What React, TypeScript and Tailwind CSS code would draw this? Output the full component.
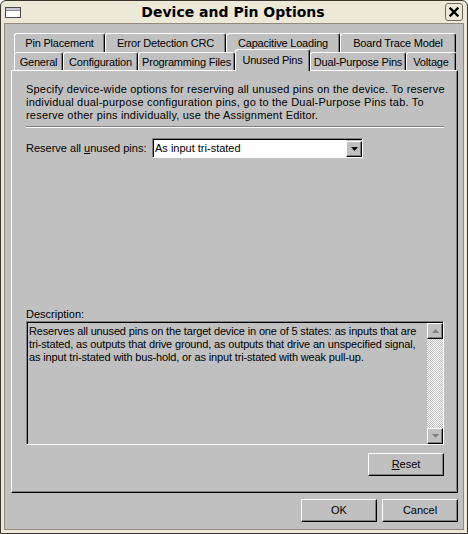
import React from "react";

const F = { fontFamily: '"Liberation Sans", Arial, sans-serif' };

function Tab({ label, w, selected }: { label: string; w: number; selected?: boolean }) {
  if (selected) {
    return (
      <div
        className="relative z-10 mt-[-3px] h-[22px] flex items-start justify-center pt-[4px] bg-[#c0c0c0] border-t border-l border-white border-r border-r-black rounded-t-[3px] shadow-[inset_-1px_0_0_#808080] text-[11px] text-black leading-[13px] tracking-[-0.2px] whitespace-nowrap"
        style={{ width: w }}
      >
        {label}
      </div>
    );
  }
  return (
    <div
      className="h-full flex items-start justify-center pt-[3px] bg-[#c0c0c0] border-t border-l border-white border-r border-r-black rounded-t-[3px] shadow-[inset_-1px_0_0_#808080] text-[11px] text-black leading-[13px] tracking-[-0.2px] whitespace-nowrap"
      style={{ width: w }}
    >
      {label}
    </div>
  );
}

function Button({ children, w }: { children: React.ReactNode; w: number }) {
  return (
    <div
      className="h-[23px] flex items-center justify-center border border-t-white border-l-white border-r-black border-b-black shadow-[inset_-1px_-1px_0_#808080] bg-[#c0c0c0] text-[11px] text-black"
      style={{ width: w }}
    >
      {children}
    </div>
  );
}

export default function App() {
  return (
    <div
      className="w-[468px] h-[534px] flex flex-col bg-[#ece9d8] border border-[#3a362e] rounded-t-[6px] overflow-hidden"
      style={F}
    >
      {/* Title bar */}
      <div className="h-[22px] flex items-center pl-[4px] pr-[4px]">
        <div className="w-[16px] h-[11px] mt-[1px] border border-[#4a4a4a] bg-white flex flex-col">
          <div className="h-[3px] bg-[#c8c8d8] border-b border-[#8a8a9a]" />
        </div>
        <div
          className="flex-1 text-center text-[14px] font-bold text-black leading-[20px]"
          style={{ fontFamily: '"DejaVu Sans", Verdana, sans-serif' }}
        >
          Device and Pin Options
        </div>
        <div className="w-[18px] h-[18px] mt-[-1px] rounded-[3px] border border-[#6e6a5e] bg-[#ece9d8] flex items-center justify-center">
          <svg width="10" height="10" viewBox="0 0 10 10">
            <path d="M1.5 1.5 L8.5 8.5 M8.5 1.5 L1.5 8.5" stroke="black" strokeWidth="2.4" strokeLinecap="square" />
          </svg>
        </div>
      </div>

      {/* Body */}
      <div className="flex-1 mx-[3px] mb-[3px] border border-[#8e8a7e] bg-[#c0c0c0] flex flex-col pt-[9px] pl-[6px] pr-[5px]">
        {/* Tabs row 1 */}
        <div className="h-[19px] flex pl-[3px]">
          <Tab label="Pin Placement" w={91} />
          <Tab label="Error Detection CRC" w={121} />
          <Tab label="Capacitive Loading" w={114} />
          <Tab label="Board Trace Model" w={116} />
        </div>
        {/* Tabs row 2 */}
        <div className="h-[18px] flex pl-[3px]">
          <Tab label="General" w={49} />
          <Tab label="Configuration" w={75} />
          <Tab label="Programming Files" w={97} />
          <Tab label="Unused Pins" w={75} selected />
          <Tab label="Dual-Purpose Pins" w={96} />
          <Tab label="Voltage" w={50} />
        </div>

        {/* Panel */}
        <div className="h-[423px] flex flex-col border border-t-white border-l-white border-r-black border-b-black shadow-[inset_-1px_-1px_0_#808080] pt-[12px] pl-[14px] pr-[13px] pb-[16px] text-[11px] text-black">
          <p className="leading-[13px] whitespace-nowrap tracking-[0.2px]">
            Specify device-wide options for reserving all unused pins on the device. To reserve
            <br />
            individual dual-purpose configuration pins, go to the Dual-Purpose Pins tab. To
            <br />
            reserve other pins individually, use the Assignment Editor.
          </p>
          <div className="mt-[4px] h-[2px] border-t border-[#808080] border-b border-b-white" />

          <div className="mt-[10px] flex items-center">
            <div className="w-[126px]">
              Reserve all <span className="underline">u</span>nused pins:
            </div>
            <div className="w-[211px] h-[20px] flex items-center border border-t-[#808080] border-l-[#808080] border-b-white border-r-white shadow-[inset_1px_1px_0_#000]">
              <div className="flex-1 h-full bg-white ml-[1px] mt-[1px] pl-[1px] flex items-center leading-[13px]">
                As input tri-stated
              </div>
              <div className="w-[16px] h-[16px] mt-[1px] flex items-center justify-center border border-t-white border-l-white border-r-black border-b-black shadow-[inset_-1px_-1px_0_#808080] bg-[#c0c0c0]">
                <svg width="7" height="4" viewBox="0 0 7 4">
                  <path d="M0 0 H7 L3.5 4 Z" fill="black" />
                </svg>
              </div>
            </div>
          </div>

          <div className="flex-1" />

          <div className="leading-[13px] h-[13px]">Description:</div>
          <div className="h-[124px] flex border border-t-[#808080] border-l-[#808080] border-b-white border-r-white shadow-[inset_1px_1px_0_#000]">
            <div className="flex-1 pl-[2px] pt-[3px] leading-[13px] whitespace-nowrap tracking-[-0.15px] overflow-hidden">
              Reserves all unused pins on the target device in one of 5 states: as inputs that are
              <br />
              tri-stated, as outputs that drive ground, as outputs that drive an unspecified signal,
              <br />
              as input tri-stated with bus-hold, or as input tri-stated with weak pull-up.
            </div>
            <div className="w-[16px] mt-[1px] flex flex-col">
              <div className="h-[16px] flex items-center justify-center border border-t-white border-l-white border-r-black border-b-black shadow-[inset_-1px_-1px_0_#808080] bg-[#c0c0c0]">
                <svg width="7" height="5" viewBox="0 0 7 5">
                  <path d="M3.5 0 L7 4 H0 Z" fill="#808080" />
                </svg>
              </div>
              <div className="flex-1 bg-[image:repeating-conic-gradient(#ffffff_0%_25%,#c0c0c0_0%_50%)] bg-[length:2px_2px]" />
              <div className="h-[16px] flex items-center justify-center border border-t-white border-l-white border-r-black border-b-black shadow-[inset_-1px_-1px_0_#808080] bg-[#c0c0c0]">
                <svg width="7" height="5" viewBox="0 0 7 5">
                  <path d="M0 0 H7 L3.5 4 Z" fill="#808080" />
                </svg>
              </div>
            </div>
          </div>

          <div className="mt-[8px] flex justify-end">
            <Button w={76}>
              <span>
                <span className="underline">R</span>eset
              </span>
            </Button>
          </div>
        </div>

        {/* Bottom buttons */}
        <div className="mt-[6px] flex justify-end gap-[5px]">
          <Button w={76}>OK</Button>
          <Button w={76}>Cancel</Button>
        </div>
      </div>
    </div>
  );
}
